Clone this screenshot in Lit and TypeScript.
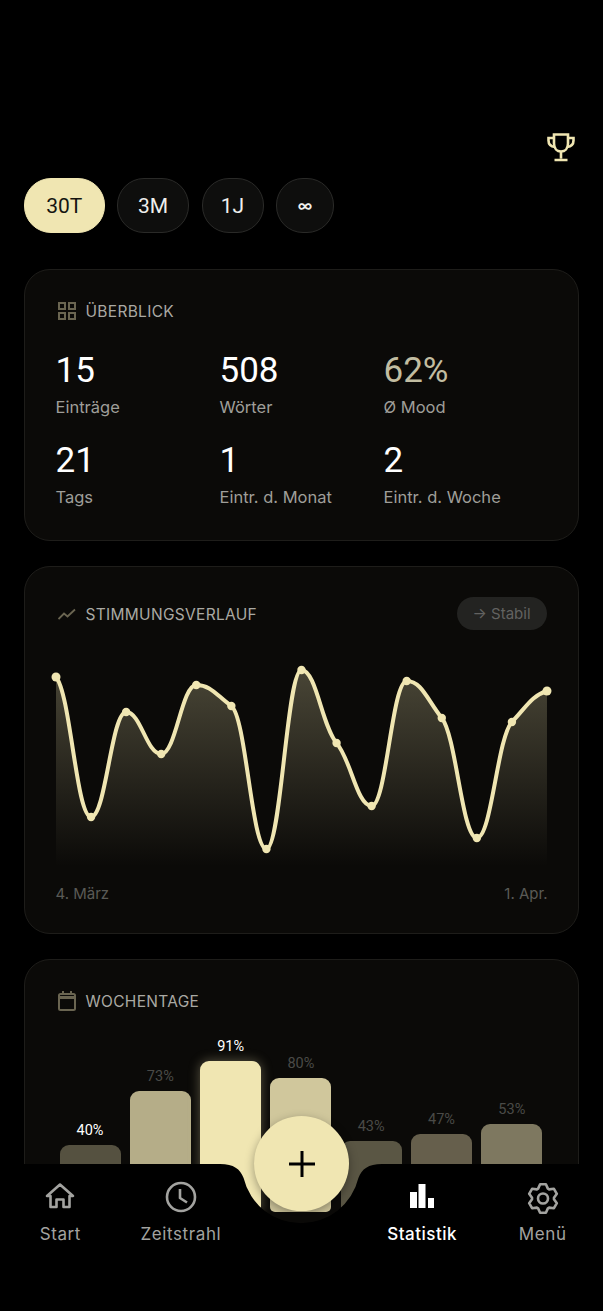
import { LitElement, html, css, svg } from "lit";
import { customElement } from "lit/decorators.js";

const points = [677, 817, 712, 754, 685, 706, 849, 670, 743, 806, 681, 718, 838, 722, 691];
const stats = [
  { value: "15", label: "Einträge" },
  { value: "508", label: "Wörter" },
  { value: "62%", label: "Ø Mood", mood: true },
  { value: "21", label: "Tags" },
  { value: "1", label: "Eintr. d. Monat" },
  { value: "2", label: "Eintr. d. Woche" },
];
const bars = [
  { pct: 40, h: 67, color: "#555140", strong: true },
  { pct: 73, h: 121, color: "#b5ad88" },
  { pct: 91, h: 151, color: "#f0e6b2", strong: true, glow: true },
  { pct: 80, h: 134, color: "#d0c79c" },
  { pct: 43, h: 71, color: "#5a5644" },
  { pct: 47, h: 78, color: "#665f4c" },
  { pct: 53, h: 88, color: "#7e7860" },
];

// chart coordinates: svg starts at page x=48, y=660
const chartX = (i: number) => 8 + i * 35.07;
const chartY = (y: number) => y - 660;

// monotone cubic, ends are set by hand to the soft start/finish of the line
function curvePath() {
  const p = points.map((y, i) => [chartX(i), chartY(y)]);
  const n = p.length;
  const h = 35.07;
  const t = p.map((cur, i) => {
    if (i === 0) return 1.2;
    if (i === n - 1) return -0.3;
    const s0 = (cur[1] - p[i - 1][1]) / h;
    const s1 = (p[i + 1][1] - cur[1]) / h;
    if (s0 * s1 <= 0) return 0;
    return Math.sign(s0) * 1.2 * Math.min(Math.abs(s0), Math.abs(s1), Math.abs(s0 + s1) / 4);
  });
  const cx = h * 0.42;
  let d = `M${p[0][0]} ${p[0][1]}`;
  for (let i = 0; i < n - 1; i++) {
    const a = p[i];
    const b = p[i + 1];
    d += ` C${a[0] + cx} ${a[1] + t[i] * cx} ${b[0] - cx} ${b[1] - t[i + 1] * cx} ${b[0]} ${b[1]}`;
  }
  return d;
}

// six tooth cog, 34 unit box
function gearPath() {
  const pts: string[] = [];
  for (let i = 0; i < 6; i++) {
    const a = (i * Math.PI) / 3 - Math.PI / 2;
    const at = (r: number, off: number) =>
      `${(17 + r * Math.cos(a + off)).toFixed(2)} ${(17.5 + r * Math.sin(a + off)).toFixed(2)}`;
    pts.push(at(11, -0.46), at(14.6, -0.2), at(14.6, 0.2), at(11, 0.46));
  }
  return `M${pts.join("L")}Z`;
}

@customElement("app-root")
export class AppRoot extends LitElement {
  static styles = css`
    :host {
      display: block;
      position: relative;
      height: 1311px;
      overflow: hidden;
      background: #000;
      font-family: Inter, "Noto Sans", sans-serif;
      color: #fff;
    }
    .page {
      padding: 131px 24px 0 24px;
      display: flex;
      flex-direction: column;
    }
    .top {
      display: flex;
      justify-content: flex-end;
      padding-right: 2px;
      height: 32px;
    }
    .pills {
      display: flex;
      gap: 12.5px;
      margin-top: 15px;
    }
    .pill {
      height: 55px;
      box-sizing: border-box;
      border-radius: 27px;
      border: 1.5px solid #2a2a28;
      background: #0e0e0d;
      display: flex;
      align-items: center;
      justify-content: center;
      font-family: Roboto, sans-serif;
      font-size: 21px;
      color: #efefec;
    }
    .pill.on {
      background: #f0e6b2;
      border-color: #f0e6b2;
      color: #141410;
    }
    .pill.small {
      font-family: Inter, sans-serif;
      font-size: 15px;
      font-weight: 600;
    }
    .card {
      box-sizing: border-box;
      margin-top: 25px;
      background: #0b0a08;
      border: 1.5px solid #1e1d1a;
      border-radius: 26px;
      padding: 0 30.5px;
    }
    .pills + .card {
      margin-top: 36px;
    }
    .head {
      display: flex;
      align-items: center;
      gap: 10px;
      height: 34px;
      padding-left: 2px;
      font-size: 15.5px;
      letter-spacing: 0.3px;
      color: #aaa9a3;
    }
    .head svg {
      flex: none;
    }
    .stats {
      display: grid;
      grid-template-columns: repeat(3, 164px);
      row-gap: 23px;
      margin-top: 23px;
    }
    .num {
      font-family: Roboto, sans-serif;
      font-size: 35px;
      line-height: 40px;
    }
    .num.mood {
      color: #c2bda1;
    }
    .lbl {
      font-size: 16.5px;
      line-height: 22px;
      margin-top: 5px;
      color: #9f9e99;
    }
    .trend {
      margin-left: auto;
      margin-right: 1px;
      height: 33px;
      width: 90px;
      box-sizing: border-box;
      padding-left: 16px;
      margin-top: -2px;
      border-radius: 17px;
      background: #232321;
      color: #626260;
      font-size: 15px;
      letter-spacing: 0;
      display: flex;
      align-items: center;
    }
    .chart {
      display: block;
      margin: 29px 0 0 -8px;
      overflow: visible;
    }
    .axis {
      display: flex;
      justify-content: space-between;
      font-size: 15px;
      line-height: 20px;
      color: #5a5a56;
      margin-top: 18px;
    }
    .bars {
      display: flex;
      gap: 9.3px;
      align-items: flex-end;
      height: 186px;
      padding: 0 4px;
      margin-top: 8px;
    }
    .col {
      width: 61px;
      display: flex;
      flex-direction: column;
      align-items: center;
    }
    .pct {
      font-family: Roboto, sans-serif;
      font-size: 14.5px;
      line-height: 18px;
      margin-bottom: 5px;
      color: #4a4a47;
    }
    .pct.strong {
      color: #fff;
    }
    .bar {
      width: 100%;
      border-radius: 9px 9px 5px 5px;
    }
    .bar.glow {
      box-shadow: 0 0 12px rgba(240, 230, 178, 0.35);
    }
    .nav {
      position: absolute;
      left: 0;
      right: 0;
      bottom: 0;
      height: 147px;
    }
    .nav-bg {
      position: absolute;
      left: 0;
      top: 0;
    }
    .items {
      position: relative;
      display: grid;
      grid-template-columns: repeat(5, 1fr);
      padding-top: 17px;
    }
    .item {
      display: flex;
      flex-direction: column;
      align-items: center;
      font-size: 17px;
      letter-spacing: 0.6px;
      color: #a3a3a0;
    }
    .item svg {
      height: 34px;
      display: block;
    }
    .item span {
      line-height: 22px;
      margin-top: 8px;
    }
    .item.on {
      color: #fff;
      font-weight: 500;
      letter-spacing: 0.5px;
    }
    .fab {
      position: absolute;
      left: 254px;
      top: 1116px;
      width: 95px;
      height: 95px;
      border-radius: 50%;
      background: #f0e6b2;
      box-shadow: 0 3px 10px rgba(0, 0, 0, 0.35);
      display: flex;
      align-items: center;
      justify-content: center;
    }
  `;

  render() {
    const line = curvePath();
    const area = `${line} L${chartX(14)} 206 L8 206 Z`;
    return html`
      <div class="page">
        <div class="top">
          <svg width="32" height="32" viewBox="0 0 32 32" fill="none" stroke="#f0e6b2" stroke-width="2.6">
            <path d="M9 3.500h14v9c0 5-3 8-7 8s-7-3-7-8z" />
            <path d="M9 7H3.500v2.500c0 3.500 2.500 6 6.500 6.500M23 7h5.500v2.500c0 3.500-2.500 6-6.500 6.500" />
            <path d="M16 20.500v7M9.500 29h13" />
          </svg>
        </div>
        <div class="pills">
          <div class="pill on" style="width:80.5px">30T</div>
          <div class="pill" style="width:72px">3M</div>
          <div class="pill" style="width:62px">1J</div>
          <div class="pill small" style="width:58px">∞</div>
        </div>

        <section class="card" style="height:272px;padding-top:24px">
          <div class="head">
            <svg width="18" height="18" viewBox="0 0 18 18" fill="none" stroke="#6a6551" stroke-width="2">
              <rect x="1" y="1" width="6" height="6" /><rect x="11" y="1" width="6" height="6" />
              <rect x="1" y="11" width="6" height="6" /><rect x="11" y="11" width="6" height="6" />
            </svg>
            ÜBERBLICK
          </div>
          <div class="stats">
            ${stats.map(
              (s) => html`<div>
                <div class="num ${s.mood ? "mood" : ""}">${s.value}</div>
                <div class="lbl">${s.label}</div>
              </div>`
            )}
          </div>
        </section>

        <section class="card" style="height:368px;padding-top:30px">
          <div class="head">
            <svg width="18" height="18" viewBox="0 0 18 18" fill="none" stroke="#6a6551" stroke-width="1.800">
              <path d="M0.500 14l5.500-5.500 3.500 3L17 4.500" />
            </svg>
            STIMMUNGSVERLAUF
            <div class="trend">→ Stabil</div>
          </div>
          <svg class="chart" width="507" height="206" viewBox="0 0 507 206">
            <defs>
              <linearGradient id="fade" x1="0" y1="0" x2="0" y2="1">
                <stop offset="0" stop-color="#f0e6b2" stop-opacity="0.27" />
                <stop offset="1" stop-color="#f0e6b2" stop-opacity="0" />
              </linearGradient>
            </defs>
            <path d=${area} fill="url(#fade)" />
            <path d=${line} fill="none" stroke="#f0e6b2" stroke-width="4" stroke-linecap="round" />
            ${points.map((y, i) => svg`<circle cx=${chartX(i)} cy=${chartY(y)} r=${i === 0 || i === 14 ? 4.5 : 4.2} fill="#f0e6b2" />`)}
          </svg>
          <div class="axis"><span>4. März</span><span>1. Apr.</span></div>
        </section>

        <section class="card" style="height:400px;padding-top:24px">
          <div class="head">
            <svg width="18" height="20" viewBox="0 0 18 20" fill="none" stroke="#6a6551" stroke-width="2">
              <rect x="1" y="3" width="16" height="16" rx="1.500" />
              <path d="M1 6.500h16" stroke-width="3" /><path d="M5 0v3M13 0v3" />
            </svg>
            WOCHENTAGE
          </div>
          <div class="bars">
            ${bars.map(
              (b) => html`<div class="col">
                <div class="pct ${b.strong ? "strong" : ""}">${b.pct}%</div>
                <div class="bar ${b.glow ? "glow" : ""}" style="height:${b.h}px;background:${b.color}"></div>
              </div>`
            )}
          </div>
        </section>
      </div>

      <nav class="nav">
        <svg class="nav-bg" width="603" height="147" viewBox="0 0 603 147">
          <path d="M0 0H220C234 0 240 5 243.600 14A59 59 0 0 0 358.400 14C362 5 368 0 382 0H603V147H0Z" fill="#000" />
        </svg>
        <div class="items">
          <div class="item">
            <svg width="34" viewBox="0 0 34 34" fill="none" stroke="#a3a3a0" stroke-width="2.600" stroke-linejoin="round">
              <path d="M4 15L17 3.500 30 15h-3.500v11h-6v-7.500h-7V26h-6V15z" />
            </svg>
            <span>Start</span>
          </div>
          <div class="item">
            <svg width="34" viewBox="0 0 34 34" fill="none" stroke="#a3a3a0" stroke-width="2.600" stroke-linejoin="round">
              <circle cx="17" cy="16" r="14" /><path d="M16 8v9l7 4.500" />
            </svg>
            <span>Zeitstrahl</span>
          </div>
          <div class="item"></div>
          <div class="item on">
            <svg width="34" viewBox="0 0 34 34" fill="#fff">
              <rect x="5" y="11" width="7" height="16" /><rect x="13.500" y="3" width="7" height="24" /><rect x="23" y="17" width="6" height="10" />
            </svg>
            <span>Statistik</span>
          </div>
          <div class="item">
            <svg width="34" viewBox="0 0 34 34" fill="none" stroke="#a3a3a0" stroke-width="2.600" stroke-linejoin="round">
              <circle cx="17" cy="17.500" r="5" />
              <path d=${gearPath()} />
            </svg>
            <span>Menü</span>
          </div>
        </div>
      </nav>
      <div class="fab">
        <svg width="26" height="26" viewBox="0 0 26 26" stroke="#000" stroke-width="3"><path d="M13 0v26M0 13h26" /></svg>
      </div>
    `;
  }
}
